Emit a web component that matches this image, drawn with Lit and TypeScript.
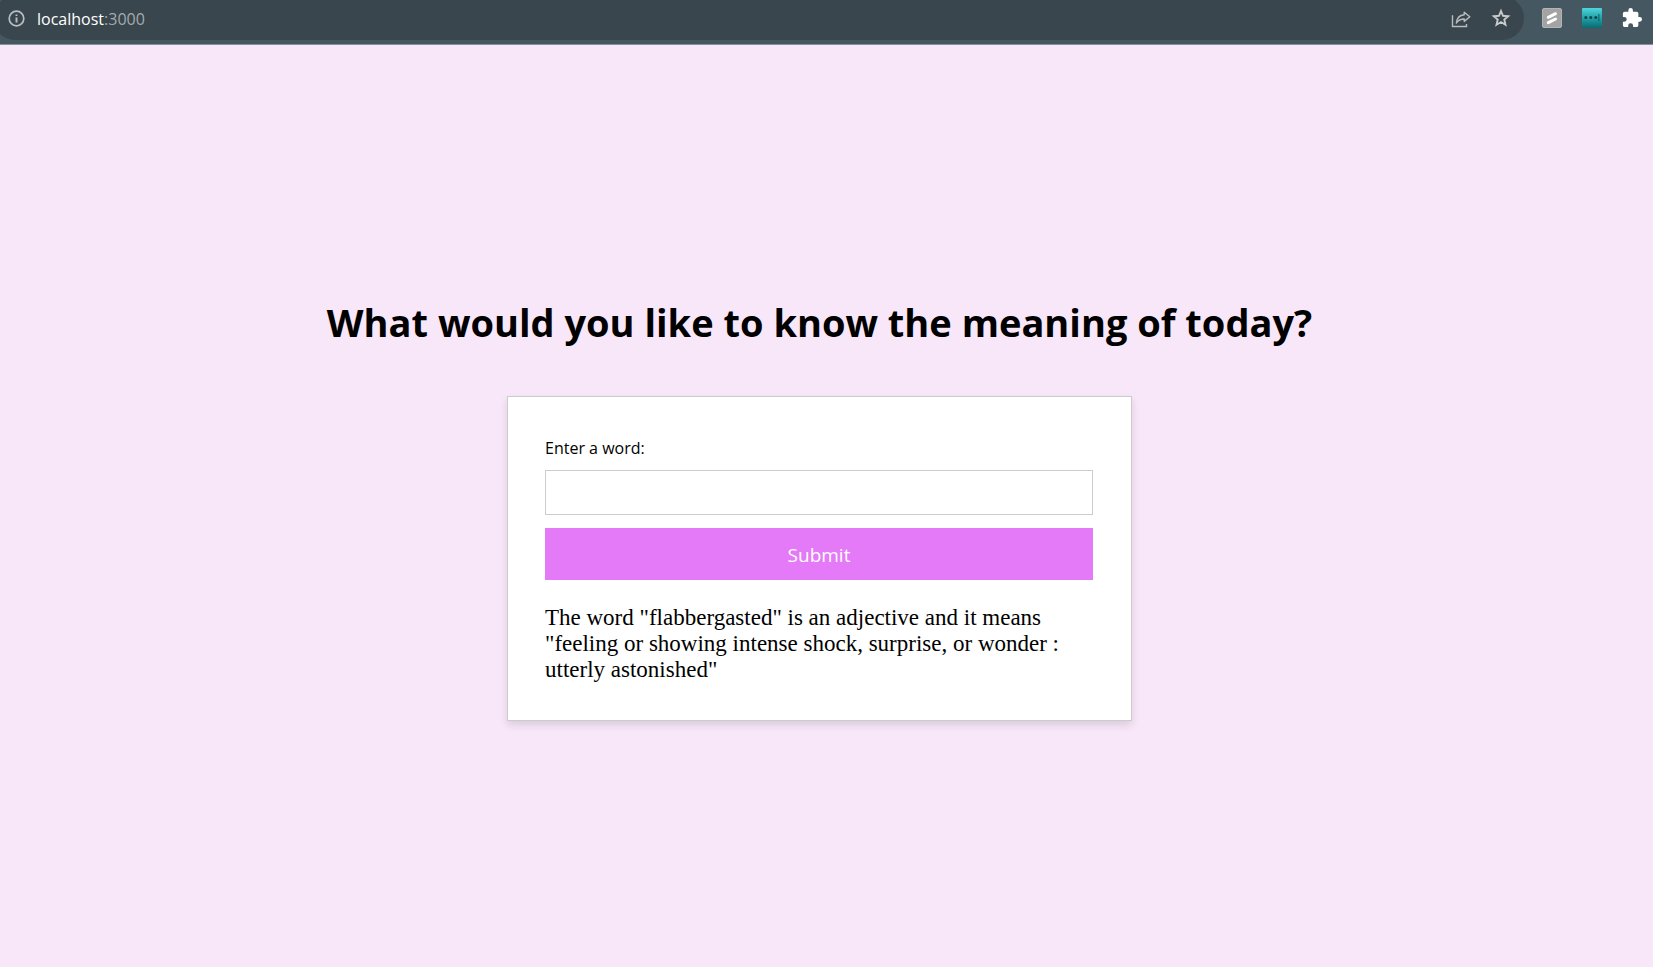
import { LitElement, html, css } from "lit";
import { customElement, state } from "lit/decorators.js";

@customElement("browser-bar")
class BrowserBar extends LitElement {
  static styles = css`
    :host {
      display: flex;
      height: 44px;
      overflow: hidden;
      background: #455760;
      border-bottom: 1px solid #81949c;
      font-family: "Open Sans", "Noto Sans", sans-serif;
    }
    .address {
      flex: 1;
      display: flex;
      align-items: center;
      height: 44px;
      margin: -4px 0 0 -7px;
      padding: 0 13px 0 15px;
      box-sizing: border-box;
      border-radius: 22px;
      background: #39464d;
    }
    .url {
      flex: 1;
      padding-top: 1px;
      margin-left: 12px;
      font-size: 16px;
      line-height: 24px;
      color: #fff;
    }
    .port {
      color: #a4abaf;
    }
    .tools,
    .extensions {
      display: flex;
      align-items: center;
      gap: 20px;
    }
    .extensions {
      height: 36px;
      padding: 0 11px 0 18px;
    }
    button {
      display: flex;
      padding: 0;
      border: 0;
      background: none;
    }
  `;

  render() {
    return html`
      <div class="address">
        <svg width="17" height="17" viewBox="0 0 17 17" fill="none" stroke="#b9bfc2" stroke-width="1.7">
          <circle cx="8.5" cy="8.5" r="7.3" />
          <path d="M8.5 7.4v5M8.5 4.4v1.7" stroke-width="1.9" />
        </svg>
        <div class="url">localhost<span class="port">:3000</span></div>
        <div class="tools">
          <button aria-label="Share this page">
            <svg width="20" height="20" viewBox="0 0 20 20" fill="none" stroke="#b9bcbe" stroke-width="1.4">
              <path d="M1.5 7.3V18.5H15.5V16" />
              <path d="M13.2 4.2 18.8 8.8 13.2 13.4V11C9.5 11 7.5 12 5.300 15 5.800 10.500 8 7.200 13.200 6.700Z" stroke-linejoin="round" />
            </svg>
          </button>
          <button aria-label="Bookmark this page">
            <svg width="20" height="20" viewBox="0 0 20 20" fill="none" stroke="#c8cbcd" stroke-width="1.9">
              <path d="M10 3 12 7.800 17.200 8.200 13.300 11.600 14.500 16.700 10 14 5.500 16.700 6.700 11.600 2.800 8.200 8 7.800Z" />
            </svg>
          </button>
        </div>
      </div>
      <div class="extensions">
        <button aria-label="Scripts extension">
          <svg width="20" height="20" viewBox="0 0 20 20">
            <rect x=".5" y=".5" width="19" height="19" rx="1.5" fill="#a3a3a3" stroke="#b4b4b4" />
            <path d="M6.300 9.300 13.500 5.700M6.300 14.600 13.500 11" stroke="#fff" stroke-width="3" stroke-linecap="round" />
          </svg>
        </button>
        <button aria-label="Text extension">
          <svg width="20" height="20" viewBox="0 0 20 20">
            <defs>
              <linearGradient id="teal" x1="0" y1="0" x2="0" y2="1">
                <stop offset="0" stop-color="#4fd6dc" />
                <stop offset=".45" stop-color="#25a6ad" />
                <stop offset="1" stop-color="#0b6a72" />
              </linearGradient>
            </defs>
            <rect width="20" height="20" rx="1" fill="url(#teal)" />
            <g fill="#0a464d">
              <circle cx="3.800" cy="9.500" r="1.500" />
              <circle cx="8.800" cy="9.500" r="1.500" />
              <circle cx="13.800" cy="9.500" r="1.500" />
              <path d="M16.500 6h.8v7h-.8z" />
            </g>
          </svg>
        </button>
        <button aria-label="Extensions">
          <svg width="20" height="20" viewBox="1 1 22 22" fill="#fff">
            <path
              d="M20.500 11H19V7c0-1.100-.900-2-2-2h-4V3.500a2.500 2.500 0 0 0-5 0V5H4c-1.100 0-2 .900-2 2v3.800h1.500a2.700 2.700 0 0 1 0 5.400H2V20c0 1.100.900 2 2 2h3.800v-1.500a2.700 2.700 0 0 1 5.400 0V22H17c1.100 0 2-.900 2-2v-4h1.500a2.500 2.500 0 0 0 0-5z"
            />
          </svg>
        </button>
      </div>
    `;
  }
}

@customElement("app-root")
class AppRoot extends LitElement {
  @state() private meaning =
    'The word "flabbergasted" is an adjective and it means "feeling or showing intense shock, surprise, or wonder : utterly astonished"';

  static styles = css`
    :host {
      display: flex;
      flex-direction: column;
      min-height: 100vh;
      background: #f8e7f9;
      color: #000;
      font-family: "Open Sans", "Noto Sans", sans-serif;
    }
    main {
      flex: 1;
      display: flex;
      flex-direction: column;
      align-items: center;
      justify-content: center;
      padding: 2px 14px 0 0;
    }
    h1 {
      margin: 0 0 46px;
      font-size: 38px;
      line-height: 56px;
      font-weight: 700;
      text-align: center;
    }
    form {
      display: flex;
      flex-direction: column;
      width: 100%;
      max-width: 625px;
      padding: 37px 38px 37px 37px;
      box-sizing: border-box;
      background: #fff;
      border: 1px solid #ccc;
      box-shadow: 0 4px 8px rgba(0, 0, 0, 0.12);
    }
    label {
      padding-top: 1px;
      margin-bottom: 9px;
      font-size: 16px;
      line-height: 26px;
    }
    input {
      height: 45px;
      margin: 0 0 13px;
      padding: 0 12px;
      box-sizing: border-box;
      border: 1px solid #ccc;
      border-radius: 0;
      background: #fff;
      font: inherit;
      font-size: 16px;
    }
    button {
      height: 52px;
      padding: 2px 0 0;
      border: 0;
      background: #e47af7;
      color: #fff;
      font: inherit;
      font-size: 19px;
    }
    p {
      margin: 25px 0 0;
      font-family: "Liberation Serif", serif;
      font-size: 23px;
      line-height: 26px;
    }
  `;

  private submit(event: Event) {
    event.preventDefault();
  }

  render() {
    return html`
      <browser-bar></browser-bar>
      <main>
        <h1>What would you like to know the meaning of today?</h1>
        <form @submit=${this.submit}>
          <label for="word">Enter a word:</label>
          <input id="word" type="text" autocomplete="off" />
          <button type="submit">Submit</button>
          <p>${this.meaning}</p>
        </form>
      </main>
    `;
  }
}
